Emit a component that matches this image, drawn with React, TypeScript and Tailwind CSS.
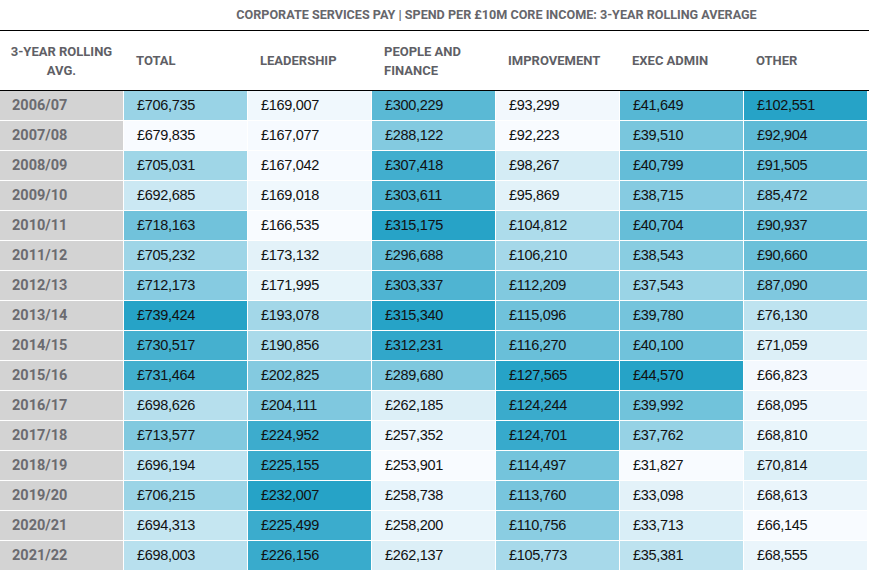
import React from "react";

const columns = ["TOTAL", "LEADERSHIP", "PEOPLE AND FINANCE", "IMPROVEMENT", "EXEC ADMIN", "OTHER"];

const rows: Array<[string, number[]]> = [
  ["2006/07", [706735, 169007, 300229, 93299, 41649, 102551]],
  ["2007/08", [679835, 167077, 288122, 92223, 39510, 92904]],
  ["2008/09", [705031, 167042, 307418, 98267, 40799, 91505]],
  ["2009/10", [692685, 169018, 303611, 95869, 38715, 85472]],
  ["2010/11", [718163, 166535, 315175, 104812, 40704, 90937]],
  ["2011/12", [705232, 173132, 296688, 106210, 38543, 90660]],
  ["2012/13", [712173, 171995, 303337, 112209, 37543, 87090]],
  ["2013/14", [739424, 193078, 315340, 115096, 39780, 76130]],
  ["2014/15", [730517, 190856, 312231, 116270, 40100, 71059]],
  ["2015/16", [731464, 202825, 289680, 127565, 44570, 66823]],
  ["2016/17", [698626, 204111, 262185, 124244, 39992, 68095]],
  ["2017/18", [713577, 224952, 257352, 124701, 37762, 68810]],
  ["2018/19", [696194, 225155, 253901, 114497, 31827, 70814]],
  ["2019/20", [706215, 232007, 258738, 113760, 33098, 68613]],
  ["2020/21", [694313, 225499, 258200, 110756, 33713, 66145]],
  ["2021/22", [698003, 226156, 262137, 105773, 35381, 68555]],
];

const light = [248, 251, 255];
const dark = [38, 163, 199];

// min/max per column for the heat scale
const ranges = columns.map((_, i) => {
  const vals = rows.map((r) => r[1][i]);
  return [Math.min(...vals), Math.max(...vals)];
});

function heat(value: number, col: number) {
  const [min, max] = ranges[col];
  const t = (value - min) / (max - min);
  const c = light.map((l, k) => Math.round(l + (dark[k] - l) * t));
  return `rgb(${c[0]},${c[1]},${c[2]})`;
}

const fmt = (n: number) => "£" + n.toLocaleString("en-GB");

export default function App() {
  return (
    <div className="w-[869px] h-[571px] bg-white overflow-hidden font-['Roboto',sans-serif]">
      {/* Title */}
      <div className="flex h-[31px] border-b border-black">
        <div className="w-[124px]" />
        <div className="flex-1 flex items-center justify-center text-[12.6px] font-bold text-[#66666b]">
          CORPORATE SERVICES PAY | SPEND PER £10M CORE INCOME: 3-YEAR ROLLING AVERAGE
        </div>
      </div>

      {/* Column headers */}
      <div className="grid grid-cols-[repeat(7,123px)] gap-x-px h-[60px] border-b border-black text-[13px] font-bold text-[#5f5f66] leading-[19px]">
        <div className="flex items-center justify-center text-center px-2">3-YEAR ROLLING AVG.</div>
        {columns.map((c) => (
          <div key={c} className="flex items-center pl-[12px] pr-6">
            {c}
          </div>
        ))}
      </div>

      {/* Data */}
      <div className="grid grid-cols-[repeat(7,123px)] gap-px">
        {rows.map(([year, vals]) => (
          <React.Fragment key={year}>
            <div className="h-[29px] flex items-center pl-[12px] bg-[#d3d3d3] text-[14.5px] font-bold text-[#6b6b70]">
              {year}
            </div>
            {vals.map((v, i) => (
              <div
                key={i}
                className="h-[29px] flex items-center pl-[13px] text-[14.5px] text-[#111] tracking-[-0.3px] font-['Liberation_Sans',sans-serif]"
                style={{ backgroundColor: heat(v, i) }}
              >
                {fmt(v)}
              </div>
            ))}
          </React.Fragment>
        ))}
      </div>
    </div>
  );
}
